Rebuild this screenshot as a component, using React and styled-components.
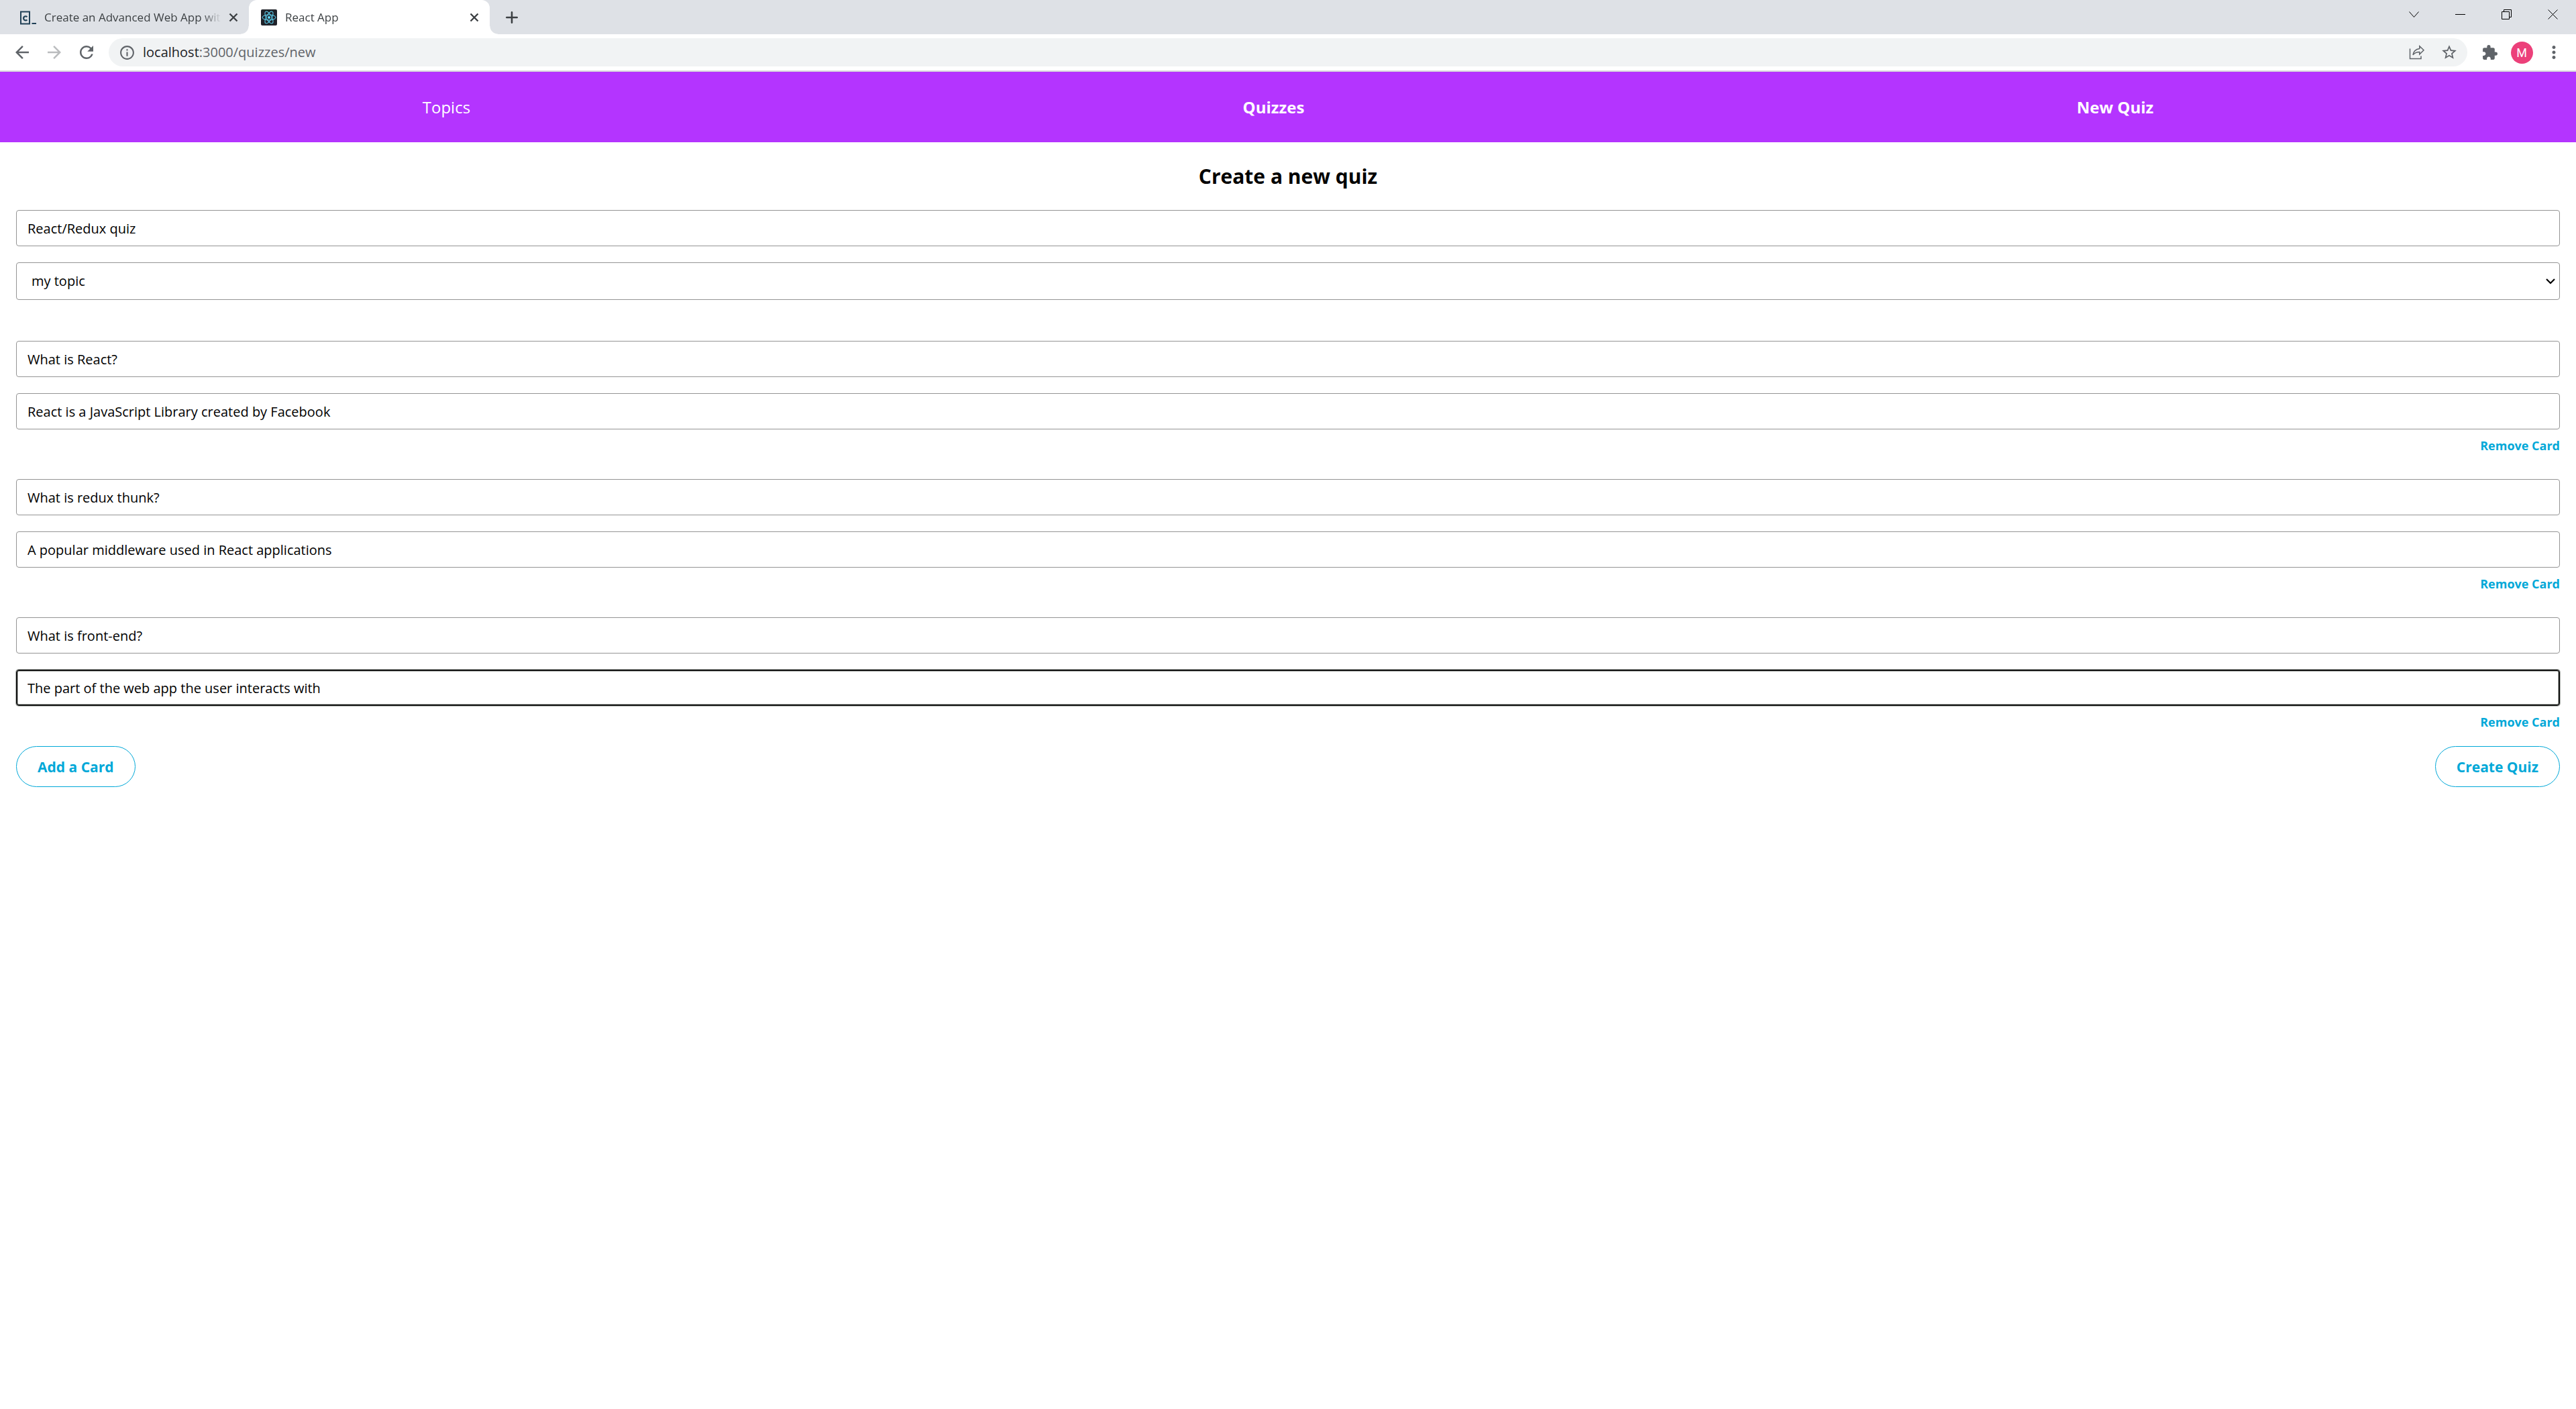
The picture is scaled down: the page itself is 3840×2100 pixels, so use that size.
import React from "react";
import styled, { createGlobalStyle, css } from "styled-components";
import { MdArrowBack, MdArrowForward, MdRefresh, MdStarBorder, MdExtension, MdMoreVert, MdInfoOutline } from "react-icons/md";

const PURPLE = "#b434ff";
const ACCENT = "#00a8d8";

const GlobalStyle = createGlobalStyle`
  * { box-sizing: border-box; }
  body {
    margin: 0;
    background: #fff;
    color: #000;
    font-family: "Open Sans", "Noto Sans", sans-serif;
  }
  button, input, select { font-family: inherit; }
`;

/* ---------- Browser chrome ---------- */

const TabStrip = styled.header`
  display: flex;
  height: 51px;
  padding-left: 12px;
  background: #dee1e6;
`;

const Tab = styled.div`
  position: relative;
  display: flex;
  align-items: center;
  width: 359px;
  padding: 0 11px 0 18px;
  color: #3c4043;
  ${(p) =>
    p.$active &&
    css`
      background: #fff;
      border-radius: 12px 12px 0 0;
      &::before,
      &::after {
        content: "";
        position: absolute;
        bottom: 0;
        width: 12px;
        height: 12px;
      }
      &::before {
        right: 100%;
        background: radial-gradient(circle at 0 0, transparent 11px, #fff 12px);
      }
      &::after {
        left: 100%;
        background: radial-gradient(circle at 100% 0, transparent 11px, #fff 12px);
      }
    `}
`;

const TabTitle = styled.span`
  flex: 1;
  min-width: 0;
  margin: 0 6px 0 12px;
  overflow: hidden;
  white-space: nowrap;
  font-size: 17px;
  line-height: 24px;
  mask-image: linear-gradient(to right, #000 calc(100% - 28px), transparent);
`;

const IconButton = styled.button`
  display: flex;
  align-items: center;
  justify-content: center;
  flex: none;
  width: ${(p) => p.$width || 48}px;
  height: ${(p) => p.$height || 48}px;
  padding: 0;
  border: 0;
  background: transparent;
  color: ${(p) => p.$color || "#5f6368"};
`;

const WindowControls = styled.div`
  display: flex;
  margin-left: auto;
`;

const Toolbar = styled.div`
  display: flex;
  align-items: center;
  gap: 9px;
  height: 56px;
  padding: 0 9px;
  background: #fff;
  border-bottom: 2px solid #d9dadc;
`;

const ToolGroup = styled.div`
  display: flex;
`;

const AddressBar = styled.div`
  display: flex;
  align-items: center;
  flex: 1;
  height: 42px;
  padding: 0 3px;
  border-radius: 21px;
  background: #f1f3f4;
`;

const Address = styled.span`
  flex: 1;
  color: #5f6368;
  font-size: 20px;
  line-height: 28px;
`;

const Host = styled.span`
  color: #202124;
`;

const Avatar = styled.span`
  display: flex;
  align-items: center;
  justify-content: center;
  width: 33px;
  height: 33px;
  border-radius: 50%;
  background: #ec407a;
  color: #fff;
  font: 18px/33px Roboto, sans-serif;
`;

/* ---------- Page ---------- */

const Nav = styled.nav`
  display: flex;
  align-items: center;
  justify-content: space-around;
  height: 105px;
  padding: 0 54px;
  background: ${PURPLE};
`;

const NavLink = styled.a`
  color: #fff;
  font-size: 24px;
  font-weight: ${(p) => (p.$bold ? 700 : 400)};
  line-height: 36px;
  text-decoration: none;
`;

const Main = styled.main`
  padding: 30px 24px;
`;

const Title = styled.h1`
  margin: 0 0 29px;
  font-size: 30px;
  line-height: 42px;
  text-align: center;
`;

const Stack = styled.div`
  display: flex;
  flex-direction: column;
  gap: 24px;
`;

const field = css`
  width: 100%;
  border: 1px solid #949494;
  border-radius: 4px;
  background: #fff;
  color: #000;
  font-family: "Open Sans", "Noto Sans", sans-serif;
  font-size: 20px;
  line-height: 28px;
  outline: none;
`;

const TextInput = styled.input`
  ${field}
  height: 54px;
  padding: 0 16px;
  ${(p) =>
    p.$focused &&
    css`
      border-color: #101010;
      box-shadow: 0 0 0 1px #b4b8b4, inset 0 0 0 1px #101010, inset 0 0 0 2px #b4b8b4;
    `}
`;

const SelectBox = styled.div`
  display: grid;
  align-items: center;
  > * {
    grid-area: 1 / 1;
  }
  > svg {
    justify-self: end;
    margin-right: 7px;
    pointer-events: none;
  }
`;

const Select = styled.select`
  ${field}
  appearance: none;
  height: 56px;
  padding: 0 22px;
`;

const Cards = styled.div`
  display: flex;
  flex-direction: column;
  gap: 38px;
  margin: 61px 0 24px;
`;

const RemoveRow = styled.div`
  display: flex;
  justify-content: flex-end;
  margin-top: -12px;
`;

const RemoveButton = styled.button`
  padding: 0;
  border: 0;
  background: none;
  color: ${ACCENT};
  font-size: 18px;
  font-weight: 700;
  line-height: 24px;
`;

const Actions = styled.div`
  display: flex;
  justify-content: space-between;
`;

const PillButton = styled.button`
  height: 61px;
  padding: 0 31px;
  border: 1px solid ${ACCENT};
  border-radius: 31px;
  background: #fff;
  color: ${ACCENT};
  font-size: 21px;
  font-weight: 700;
  line-height: 30px;
`;

/* ---------- Drawings ---------- */

const CodeFavicon = () => (
  <svg width="24" height="24" viewBox="0 0 24 24" fill="none" stroke="#204056">
    <rect x="1" y="3.500" width="13" height="18" strokeWidth="2" />
    <path d="M10.400 11.200a3.100 3.100 0 1 0 0 4.300" strokeWidth="2.200" />
    <path d="M17.500 21h6.500" strokeWidth="2" />
  </svg>
);

const ReactFavicon = () => (
  <svg width="24" height="24" viewBox="0 0 24 24">
    <rect width="24" height="24" rx="2" fill="#20232a" />
    <g fill="none" stroke="#61dafb" strokeWidth="1">
      <ellipse cx="12" cy="12" rx="10" ry="4" />
      <ellipse cx="12" cy="12" rx="10" ry="4" transform="rotate(60 12 12)" />
      <ellipse cx="12" cy="12" rx="10" ry="4" transform="rotate(120 12 12)" />
    </g>
    <circle cx="12" cy="12" r="2" fill="#61dafb" />
  </svg>
);

const CloseTabIcon = () => (
  <svg width="14" height="14" viewBox="0 0 14 14" stroke="#3c4043" strokeWidth="2.4">
    <path d="M1.5 1.5l11 11M12.5 1.5l-11 11" />
  </svg>
);

const PlusIcon = () => (
  <svg width="18" height="18" viewBox="0 0 18 18" stroke="#3c4043" strokeWidth="2.6" strokeLinecap="round">
    <path d="M9 1.3v15.4M1.3 9h15.4" />
  </svg>
);

const windowGlyphs = {
  "Search tabs": <path d="M.5 3.500l7 8 7-8" />,
  Minimize: <path d="M0 7.500h15" />,
  Restore: <path d="M.5 3.500h11v11H.5zM3.500 3.500v-3h11v11h-3" />,
  Close: <path d="M.5.5l14 14M14.500.5l-14 14" />,
};

const WindowIcon = ({ name }) => (
  <svg width="15" height="15" viewBox="0 0 15 15" fill="none" stroke="#000">
    {windowGlyphs[name]}
  </svg>
);

const ShareIcon = () => (
  <svg width="24" height="22" viewBox="0 0 24 22" fill="none" stroke="#5f6368" strokeWidth="1.5">
    <path d="M1.5 5.5v15h16.5v-4" />
    <path d="M15.800 1.800l6.200 6-6.200 6.200v-3.600c-4.600 0-7.300 1-9.800 4.400.8-5.200 4-8.600 9.800-9.400z" />
  </svg>
);

const SelectArrow = () => (
  <svg width="14" height="10" viewBox="0 0 14 10" fill="none" stroke="#000" strokeWidth="2.2">
    <path d="M1 2l6 6 6-6" />
  </svg>
);

/* ---------- Content ---------- */

const links = [
  { label: "Topics", href: "#topics" },
  { label: "Quizzes", href: "#quizzes", bold: true },
  { label: "New Quiz", href: "#new", bold: true },
];

const cards = [
  { front: "What is React?", back: "React is a JavaScript Library created by Facebook" },
  { front: "What is redux thunk?", back: "A popular middleware used in React applications" },
  { front: "What is front-end?", back: "The part of the web app the user interacts with", focused: true },
];

function BrowserChrome() {
  return (
    <>
      <TabStrip>
        <Tab>
          <CodeFavicon />
          <TabTitle>Create an Advanced Web App with</TabTitle>
          <IconButton $width={24} $height={24} aria-label="Close tab">
            <CloseTabIcon />
          </IconButton>
        </Tab>
        <Tab $active>
          <ReactFavicon />
          <TabTitle>React App</TabTitle>
          <IconButton $width={24} $height={24} aria-label="Close tab">
            <CloseTabIcon />
          </IconButton>
        </Tab>
        <IconButton $width={66} $height={51} aria-label="New tab">
          <PlusIcon />
        </IconButton>
        <WindowControls>
          {Object.keys(windowGlyphs).map((name) => (
            <IconButton key={name} $width={69} $height={43} aria-label={name}>
              <WindowIcon name={name} />
            </IconButton>
          ))}
        </WindowControls>
      </TabStrip>
      <Toolbar>
        <ToolGroup>
          <IconButton aria-label="Back"><MdArrowBack size={30} /></IconButton>
          <IconButton aria-label="Forward" $color="#babcbe"><MdArrowForward size={30} /></IconButton>
          <IconButton aria-label="Reload"><MdRefresh size={30} /></IconButton>
        </ToolGroup>
        <AddressBar>
          <IconButton aria-label="Site information"><MdInfoOutline size={25} /></IconButton>
          <Address><Host>localhost</Host>:3000/quizzes/new</Address>
          <IconButton aria-label="Share"><ShareIcon /></IconButton>
          <IconButton aria-label="Bookmark"><MdStarBorder size={26} /></IconButton>
        </AddressBar>
        <ToolGroup>
          <IconButton aria-label="Extensions"><MdExtension size={25} /></IconButton>
          <IconButton aria-label="Profile"><Avatar>M</Avatar></IconButton>
          <IconButton aria-label="Menu"><MdMoreVert size={30} /></IconButton>
        </ToolGroup>
      </Toolbar>
    </>
  );
}

export default function App() {
  return (
    <>
      <GlobalStyle />
      <BrowserChrome />
      <Nav>
        {links.map((l) => (
          <NavLink key={l.label} href={l.href} $bold={l.bold}>{l.label}</NavLink>
        ))}
      </Nav>
      <Main>
        <Title>Create a new quiz</Title>
        <form onSubmit={(e) => e.preventDefault()}>
          <Stack>
            <TextInput aria-label="Quiz title" defaultValue="React/Redux quiz" />
            <SelectBox>
              <Select aria-label="Topic" defaultValue="my topic">
                <option>my topic</option>
              </Select>
              <SelectArrow />
            </SelectBox>
          </Stack>
          <Cards>
            {cards.map((card) => (
              <Stack key={card.front}>
                <TextInput aria-label="Front" defaultValue={card.front} />
                <TextInput aria-label="Back" defaultValue={card.back} $focused={card.focused} />
                <RemoveRow>
                  <RemoveButton type="button">Remove Card</RemoveButton>
                </RemoveRow>
              </Stack>
            ))}
          </Cards>
          <Actions>
            <PillButton type="button">Add a Card</PillButton>
            <PillButton type="submit">Create Quiz</PillButton>
          </Actions>
        </form>
      </Main>
    </>
  );
}
